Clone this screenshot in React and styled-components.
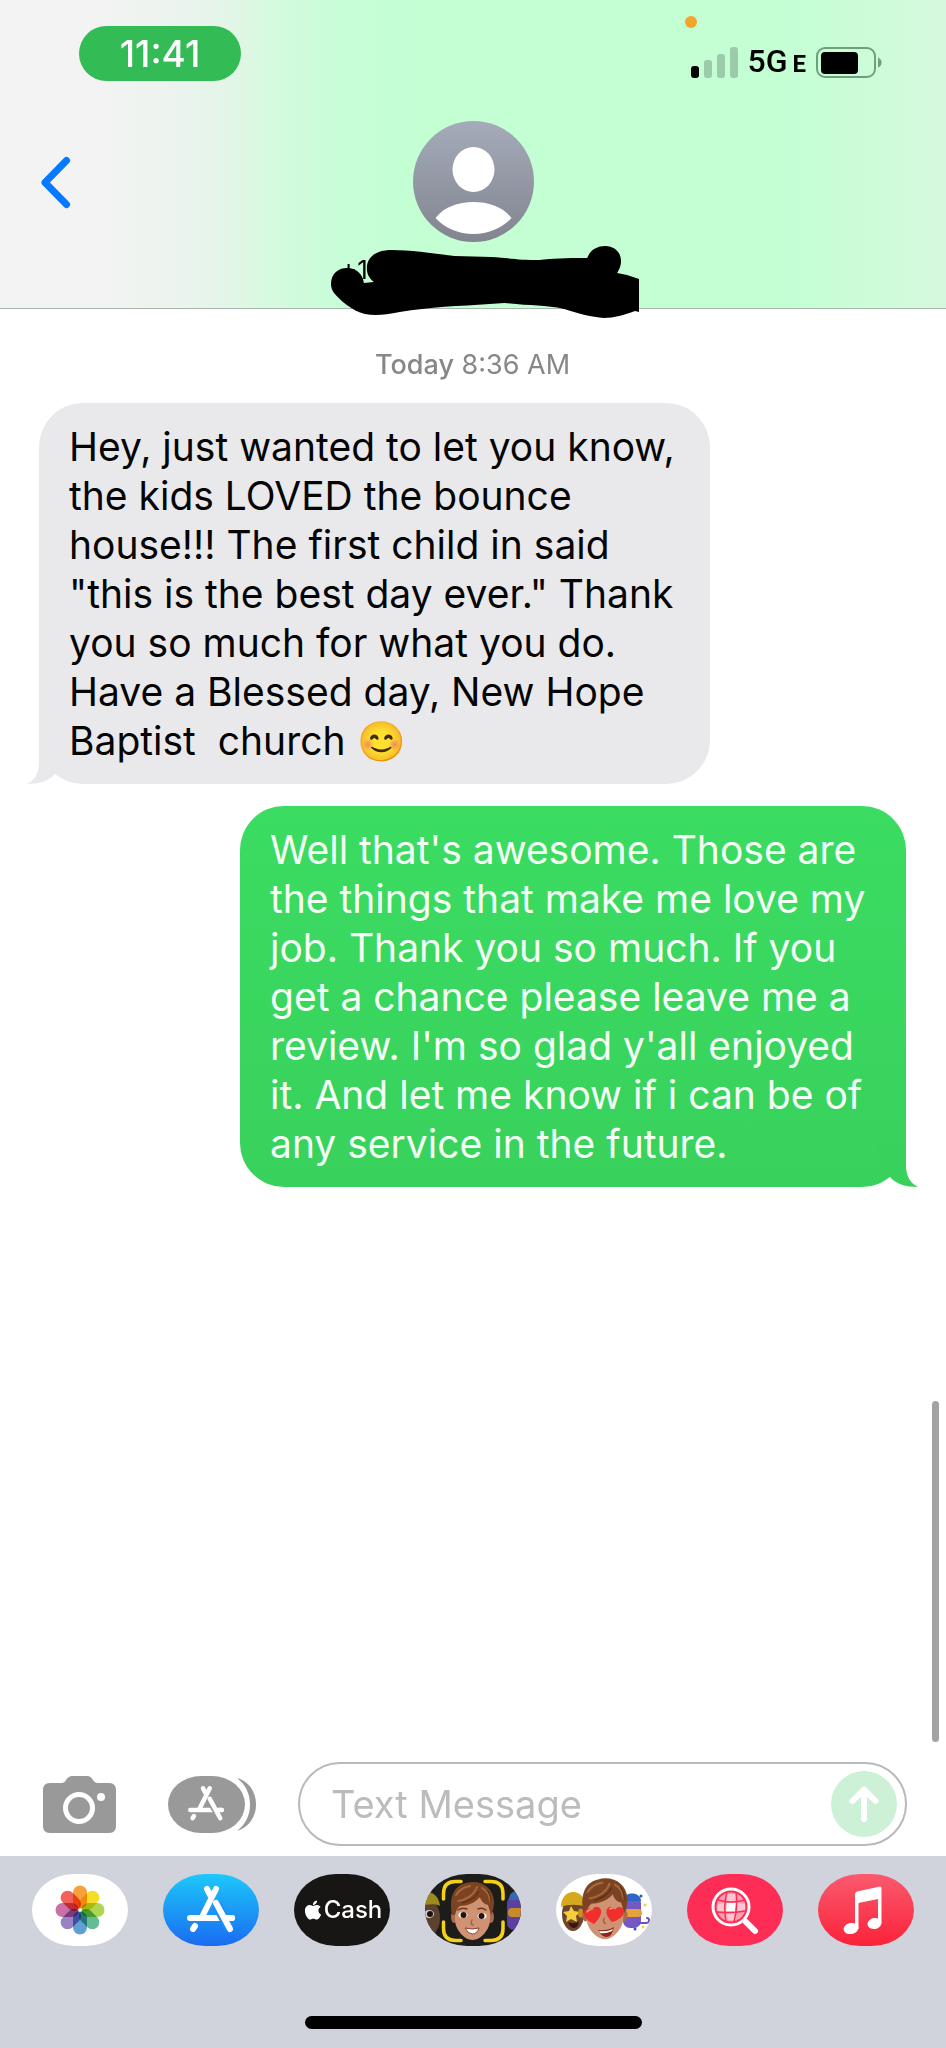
import React from 'react';
import styled, { createGlobalStyle } from 'styled-components';
import { FaApple } from 'react-icons/fa';

const GlobalStyle = createGlobalStyle`
    * {
        box-sizing: border-box;
    }

    body {
        margin: 0;
        background: #ffffff;
        font-family: Inter, "Liberation Sans", sans-serif;
    }

    button {
        padding: 0;
        border: 0;
        background: none;
        cursor: pointer;
        font-family: inherit;
    }
`;

const Page = styled.div`
    display: flex;
    flex-direction: column;
    min-height: 100vh;
    position: relative;
`;

const Header = styled.header`
    border-bottom: 1px solid #a9b8ad;
    background: linear-gradient(
        to right,
        #f3f3f3 0%,
        #f2f3f2 11%,
        #edf3ef 18%,
        #e5f5e9 23%,
        #dbf8e2 27%,
        #d0fbdc 31%,
        #c8fdd8 36%,
        #c3ffd3 44%,
        #c3ffd3 82%,
        #ccfcd8 92%,
        #d7f8de 100%
    );
`;

const StatusBar = styled.div`
    display: flex;
    justify-content: space-between;
    align-items: flex-start;
    padding: 26px 64px 0 79px;
`;

const TimePill = styled.span`
    width: 162px;
    height: 55px;
    border-radius: 28px;
    background: #33bb55;
    color: #ffffff;
    font-size: 37px;
    font-weight: 500;
    line-height: 55px;
    text-align: center;
`;

const StatusIcons = styled.div`
    position: relative;
    display: flex;
    align-items: center;
    gap: 10px;
    height: 31px;
    margin-top: 21px;
`;

const RecordingDot = styled.span`
    position: absolute;
    top: -31px;
    left: -6px;
    width: 12px;
    height: 12px;
    border-radius: 50%;
    background: #f3a52b;
`;

const Network = styled.span`
    font-family: Roboto, sans-serif;
    font-size: 32px;
    font-weight: 500;
    line-height: 32px;

    small {
        margin-left: 5px;
        font-size: 24px;
        font-weight: 700;
    }
`;

const NavBar = styled.div`
    display: grid;
    grid-template-columns: 1fr auto 1fr;
    align-items: start;
    padding: 40px 36px 0;
`;

const BackButton = styled.button`
    justify-self: start;
    margin-top: 31px;
    line-height: 0;
`;

const Contact = styled.div`
    display: flex;
    flex-direction: column;
    align-items: center;
    gap: 4px;
`;

const ContactName = styled.div`
    position: relative;
    width: 310px;
    height: 62px;
    padding: 8px 0 0 22px;
    font-size: 26px;
    line-height: 32px;
`;

const Scribble = styled.svg`
    position: absolute;
    top: 0;
    left: 12px;
`;

const Thread = styled.main`
    flex: 1;
    display: flex;
    flex-direction: column;
    padding: 40px 40px 0 39px;
`;

const Timestamp = styled.p`
    margin: 0 0 22px;
    color: #87878a;
    font-size: 27px;
    line-height: 32px;
    text-align: center;

    b {
        font-weight: 500;
    }
`;

const Bubble = styled.div`
    position: relative;
    align-self: ${({ $sent }) => ($sent ? 'flex-end' : 'flex-start')};
    width: ${({ $sent }) => ($sent ? '666px' : '671px')};
    max-width: 100%;
    margin-bottom: 22px;
    padding: 19px 30px;
    border-radius: 44px;
    background: ${({ $sent }) => ($sent ? 'linear-gradient(#3bdc62, #38d15c)' : '#e9e9eb')};
    color: ${({ $sent }) => ($sent ? '#f4fff6' : '#050505')};
    font-size: 39px;
    line-height: 49px;
    white-space: pre-wrap;
`;

const TailSvg = styled.svg`
    position: absolute;
    bottom: 0;
    fill: ${({ $sent }) => ($sent ? '#38d15c' : '#e9e9eb')};
    ${({ $sent }) => ($sent ? 'right: -12px;' : 'left: -12px; transform: scaleX(-1);')}
`;

const ScrollThumb = styled.div`
    position: absolute;
    right: 7px;
    bottom: 306px;
    width: 7px;
    height: 341px;
    border-radius: 4px;
    background: #a3a3a5;
`;

const Composer = styled.form`
    display: flex;
    align-items: center;
    padding: 0 39px 10px 43px;
`;

const Tools = styled.div`
    display: flex;
    gap: 52px;
    margin-right: 42px;
`;

const ToolButton = styled.button`
    line-height: 0;
`;

const Field = styled.div`
    flex: 1;
    min-width: 0;
    display: flex;
    align-items: center;
    height: 84px;
    padding: 0 8px 0 31px;
    border: 2px solid #b9b9bb;
    border-radius: 42px;
`;

const TextInput = styled.input`
    flex: 1;
    min-width: 0;
    padding: 0;
    border: 0;
    outline: 0;
    background: none;
    font-family: inherit;
    font-size: 38px;

    &::placeholder {
        color: #bcbcbe;
        opacity: 1;
    }
`;

const SendButton = styled.button`
    flex: none;
    width: 66px;
    height: 66px;
    border-radius: 50%;
    background: #cdf1d6;
    line-height: 0;
`;

const Drawer = styled.footer`
    display: flex;
    flex-direction: column;
    align-items: center;
    padding: 18px 32px 19px;
    background: #d0d3db;
`;

const AppRow = styled.nav`
    align-self: stretch;
    display: flex;
    justify-content: space-between;
    margin-bottom: 70px;
`;

const AppButton = styled.button`
    width: 96px;
    height: 72px;
    border-radius: 42px / 36px;
    background: ${({ $bg }) => $bg};
    overflow: hidden;
    line-height: 0;
`;

const CashLabel = styled.span`
    display: flex;
    align-items: center;
    justify-content: center;
    color: #ffffff;
    font-size: 24px;
    font-weight: 500;
    line-height: 72px;
`;

const HomeIndicator = styled.div`
    width: 337px;
    height: 13px;
    border-radius: 7px;
    background: #000000;
`;

const received = `Hey, just wanted to let you know,
the kids LOVED the bounce
house!!! The first child in said
"this is the best day ever." Thank
you so much for what you do.
Have a Blessed day, New Hope
Baptist  church 😊`;

const sent = `Well that's awesome. Those are
the things that make me love my
job. Thank you so much. If you
get a chance please leave me a
review. I'm so glad y'all enjoyed
it. And let me know if i can be of
any service in the future.`;

const SignalIcon = () => (
    <svg width="47" height="31" viewBox="0 0 47 31">
        <rect x="0" y="19" width="8" height="12" rx="3" />
        <g fill="#9bcba9">
            <rect x="13" y="13" width="8" height="18" rx="3" />
            <rect x="26" y="7" width="8" height="24" rx="3" />
            <rect x="39" y="0" width="8" height="31" rx="3" />
        </g>
    </svg>
);

const BatteryIcon = () => (
    <svg width="66" height="31" viewBox="0 0 66 31">
        <rect x="1" y="1" width="58" height="29" rx="8" fill="none" stroke="#6fa07c" strokeWidth="2" />
        <rect x="5" y="5" width="37" height="22" rx="4" />
        <path d="M62 10.5q3.600 1.500 3.600 5t-3.600 5z" fill="#6fa07c" />
    </svg>
);

const BackIcon = () => (
    <svg width="40" height="60" viewBox="0 0 40 60">
        <path
            d="M30.500 8.500 9 30.500l21.500 22"
            fill="none"
            stroke="#057aff"
            strokeWidth="7"
            strokeLinecap="round"
            strokeLinejoin="round"
        />
    </svg>
);

const Avatar = () => (
    <svg width="121" height="121" viewBox="0 0 121 121">
        <defs>
            <linearGradient id="avatar" x1="0" y1="0" x2="0" y2="1">
                <stop offset="0" stopColor="#a5abba" />
                <stop offset="1" stopColor="#82858f" />
            </linearGradient>
        </defs>
        <circle cx="60.5" cy="60.5" r="60.5" fill="url(#avatar)" />
        <ellipse cx="60.5" cy="48.5" rx="21" ry="22.5" fill="#fff" />
        <path d="M22.500 97C31 86 45 81 60.500 81s29.500 5 38 16c-9 10-23 16-38 16s-29-6-38-16z" fill="#fff" />
    </svg>
);

// marker strokes over the phone number
const MarkerScribble = () => (
    <Scribble width="310" height="73" viewBox="0 0 311 73">
        <path d="M1 38C1 28 8 22 17 22s16 6 17 15l10-1c-5-4-7-8-7-14C37 11 46 4 62 4c18 0 38 3 63 6l37 1c16 1 28 3 48 3 20-2 35-2 48-2 3-8 10-12 18-12 10 0 16 7 16 15 0 5-2 9-4 12l10 2 12 4v33l-4-1c-11 4-21 7-31 7-13-1-25-4-40-9-20-4-35-3-60-6l-15 1c-30 2-60 3-90 8-15 3-25 4-35 2C22 65 10 54 4 47c-2-3-3-6-3-9z" />
    </Scribble>
);

const Tail = ({ $sent }) => (
    <TailSvg $sent={$sent} width="50" height="46" viewBox="0 0 50 46">
        <path d="M8 2h30v22c0 11 4 18 12 22-12 0-22-3-28-10z" />
    </TailSvg>
);

const StoreGlyph = ({ width, gap }) => (
    <g fill="none" stroke="#fff" strokeWidth={width} strokeLinecap="round" strokeLinejoin="round">
        <path d="M53 15 39 43M44 15l3 6M27 44h42M30 55l2-3" />
        <path d="m53 30 14 25" stroke={gap} strokeWidth={width + 4} strokeLinecap="butt" />
        <path d="M64 44h5M53 29l14 26" />
    </g>
);

const CameraIcon = () => (
    <svg width="73" height="57" viewBox="0 0 73 57">
        <path d="M7 7h11c3 0 4-1 5-3 2-3 4-4 6-4h15c3 0 4 1 6 4 1 2 3 3 5 3h11c5 0 7 3 7 7v36c0 4-2 7-7 7H7c-5 0-7-3-7-7V14c0-4 2-7 7-7z" fill="#99999a" />
        <circle cx="36" cy="32" r="13.5" fill="none" stroke="#fff" strokeWidth="5" />
        <circle cx="58" cy="21" r="4" fill="#fff" />
    </svg>
);

const AppsIcon = () => (
    <svg width="88" height="57" viewBox="0 0 88 57">
        <rect width="77" height="57" rx="33" ry="28.5" fill="#99999a" />
        <path d="M69 2c12 3 19 14 19 26.500S81 51 69 55c8-6 13-15 13-26.500S77 8 69 2z" fill="#99999a" />
        <g transform="translate(2 1) scale(.75)">
            <StoreGlyph width={6} gap="#99999a" />
        </g>
    </svg>
);

const SendIcon = () => (
    <svg width="66" height="66" viewBox="0 0 66 66">
        <path d="M33 48V19M21.500 30 33 18.500 44.500 30" fill="none" stroke="#fff" strokeWidth="6" strokeLinecap="round" strokeLinejoin="round" />
    </svg>
);

const petals = ['#f7931e', '#f5d90a', '#a4cf3a', '#4fb286', '#4a93d0', '#8c72bd', '#c25d9b', '#ef4b3f'];

const PhotosIcon = () => (
    <svg width="96" height="72" viewBox="0 0 96 72">
        {petals.map((color, i) => (
            <rect
                key={color}
                x="41"
                y="11.5"
                width="14"
                height="23"
                rx="7"
                fill={color}
                opacity="0.88"
                transform={`rotate(${i * 45} 48 36)`}
                style={{ mixBlendMode: 'multiply' }}
            />
        ))}
        <circle cx="48" cy="36" r="1.5" fill="#fff" />
    </svg>
);

const AppStoreIcon = () => (
    <svg width="96" height="72" viewBox="0 0 96 72">
        <StoreGlyph width={6} gap="#1b8ff6" />
    </svg>
);

const Face = () => (
    <g>
        <ellipse cx="29" cy="43" rx="3" ry="6" fill="#a9694a" />
        <ellipse cx="66" cy="43" rx="3" ry="6" fill="#a9694a" />
        <path d="M30 28q17-12 35 0v18c0 9-9 20-17.500 20S30 55 30 46z" fill="#cf9272" />
        <path d="M27 41C24 24 28 12 41 9c14-4 27 4 28 18 0 6-1 10-3 14l-3-10c-4-1-7-4-8-8-5 6-13 9-20 9-3 2-4 5-5 9z" fill="#7b4322" />
        <path d="M33 27c8-1 16-6 19-14M31 21c3-5 8-8 14-9M57 14c5 3 8 7 8 13" fill="none" stroke="#a5683d" strokeWidth="2" strokeLinecap="round" />
        <path d="M37 29c8-2 14-6 17-12M62 16c3 4 4 8 4 12" fill="none" stroke="#54290f" strokeWidth="1" />
        <path d="M47 46q-2 4 1 5" fill="none" stroke="#a56243" strokeWidth="1.5" strokeLinecap="round" />
    </g>
);

const MemojiIcon = () => (
    <svg width="96" height="72" viewBox="0 0 96 72">
        <ellipse cx="3" cy="44" rx="12" ry="18" fill="#5d4131" />
        <path d="M-6 32c0-18 19-18 21 0-5-3-14-2-21 1z" fill="#9c8a1c" />
        <ellipse cx="4" cy="40" rx="5" ry="4" fill="#d8cfc8" />
        <circle cx="5" cy="40" r="3" fill="#1a1110" />
        <rect x="82" y="22" width="18" height="34" rx="7" fill="#5a419e" />
        <path d="M84 26c0-8 6-10 12-9v9z" fill="#3767b0" />
        <rect x="83" y="34" width="18" height="9" rx="4" fill="#c88b2c" />
        <Face />
        <path d="M33 36q4-3 9-1M53 35q4-2 8 1" fill="none" stroke="#6e391f" strokeWidth="1.5" strokeLinecap="round" />
        <ellipse cx="38" cy="41" rx="4.5" ry="3" fill="#fff" />
        <ellipse cx="57" cy="42" rx="4.5" ry="3" fill="#fff" />
        <circle cx="38.5" cy="41" r="3" fill="#251511" />
        <circle cx="56.5" cy="42" r="3" fill="#251511" />
        <path d="M40 54q7 2 14 0-2 6-6.500 6T40 54z" fill="#fff" stroke="#8c3e30" strokeWidth="1" />
        <path
            d="M18.500 25v-5.500q0-12 12-12H36M60 7.500h6q12 0 12 12V25M18.500 48v6.500q0 12 12 12H36M60 66.500h6q12 0 12-12V48"
            fill="none"
            stroke="#f6cf17"
            strokeWidth="3.500"
            strokeLinecap="round"
        />
    </svg>
);

const StickerIcon = () => (
    <svg width="96" height="72" viewBox="0 0 96 72">
        <ellipse cx="17" cy="40" rx="11" ry="17" fill="#70452c" />
        <path d="M5 33c0-20 24-20 25 0-7-3-18-3-25 0z" fill="#d5a81d" />
        <path d="m15 32 3 5 6 1-4 4 1 6-6-3-5 3 1-6-4-4 6-1z" fill="#f5ce3e" />
        <ellipse cx="25" cy="39" rx="3" ry="4.500" fill="#c79322" />
        <path d="M12 48q6 3 11-1-1 7-5 7t-6-6z" fill="#3a1612" />
        <rect x="67" y="22" width="18" height="32" rx="7" fill="#7458c4" />
        <path d="M67 27c0-10 18-10 18 0z" fill="#2b67c6" />
        <rect x="68" y="35" width="18" height="8" rx="4" fill="#e9a23a" />
        <path d="M82 49h8c4 0 4-5 1-5" fill="none" stroke="#6b50c0" strokeWidth="2" strokeLinecap="round" />
        <circle cx="85" cy="22" r="1.500" fill="#2958b8" />
        <circle cx="89" cy="31" r="1.500" fill="#efd34a" />
        <circle cx="87" cy="53" r="1.500" fill="#efd34a" />
        <circle cx="79" cy="55" r="1.500" fill="#2958b8" />
        <g transform="translate(-1 -4) scale(1.050)">
            <Face />
        </g>
        <path d="M42 56q9 1 16-3-2 10-8 10-5-1-8-7z" fill="#8e2318" />
        <path d="M43 57q8 1 14-2l-1 2q-6 3-12 2z" fill="#fff" />
        <g fill="#ee2f2b">
            <path d="M38 50c-6-3-11-7-10-12 2-5 7-4 8-1 1-5 7-6 9-1 1 5-3 10-7 14z" />
            <path d="M56 48c-4-4-7-9-5-13 3-4 7-2 8 1 2-4 8-4 9 1 0 5-5 9-12 11z" />
        </g>
        <path d="M31 38q1-2 3-2M54 35q1-1 3-1" fill="none" stroke="#ff9b8f" strokeWidth="1.500" strokeLinecap="round" />
    </svg>
);

const ImagesIcon = () => (
    <svg width="96" height="72" viewBox="0 0 96 72">
        <circle cx="44" cy="33" r="14.5" fill="#fd9fb1" />
        <path d="M39 20h11l-1 8h-9zM31 30l8-1-1 8h-8zM50 29l8 1v6l-8 1zM39 38l10-1v9h-8z" fill="#fec6d0" />
        <path d="M40 29h9l-1 8h-9z" fill="#fff" />
        <path d="M40 18q-4 14-1 30M49 18q2 14-2 30M31 26q13 4 27 0M30 38q14 2 28-1" fill="none" stroke="#fd2d55" strokeWidth="1.500" />
        <g fill="none" stroke="#fff">
            <circle cx="44" cy="33" r="18" strokeWidth="3" />
            <path d="m59 48 9 9" strokeWidth="6" strokeLinecap="round" />
        </g>
    </svg>
);

const MusicIcon = () => (
    <svg width="96" height="72" viewBox="0 0 96 72">
        <g fill="#fff">
            <path d="M37 20q0-2 2-2.500l23-5q1.500 0 1.500 1.500V49H60V25L40.500 29v26H37z" />
            <ellipse cx="33" cy="54.500" rx="7.500" ry="5.500" transform="rotate(-12 33 54.500)" />
            <ellipse cx="56.500" cy="49.500" rx="7" ry="5.500" transform="rotate(-12 56.500 49.500)" />
        </g>
    </svg>
);

const apps = [
    { name: 'Photos', bg: '#ffffff', icon: <PhotosIcon /> },
    { name: 'App Store', bg: 'linear-gradient(#1dc8fb, #1a6bf0)', icon: <AppStoreIcon /> },
    { name: 'Apple Cash', bg: '#171615', icon: <CashLabel><FaApple size={22} />Cash</CashLabel> },
    { name: 'Memoji', bg: '#1c1c1b', icon: <MemojiIcon /> },
    { name: 'Stickers', bg: '#ffffff', icon: <StickerIcon /> },
    { name: 'Images', bg: '#fd2d55', icon: <ImagesIcon /> },
    { name: 'Music', bg: 'linear-gradient(#fb5a6e, #fa2239)', icon: <MusicIcon /> },
];

export function App() {
    return (
        <Page>
            <GlobalStyle />
            <Header>
                <StatusBar>
                    <TimePill>11:41</TimePill>
                    <StatusIcons>
                        <RecordingDot />
                        <SignalIcon />
                        <Network>5G<small>E</small></Network>
                        <BatteryIcon />
                    </StatusIcons>
                </StatusBar>
                <NavBar>
                    <BackButton aria-label="Back"><BackIcon /></BackButton>
                    <Contact>
                        <Avatar />
                        <ContactName>
                            +1
                            <MarkerScribble />
                        </ContactName>
                    </Contact>
                </NavBar>
            </Header>

            <Thread>
                <Timestamp><b>Today</b> 8:36 AM</Timestamp>
                <Bubble>
                    {received}
                    <Tail />
                </Bubble>
                <Bubble $sent>
                    {sent}
                    <Tail $sent />
                </Bubble>
            </Thread>
            <ScrollThumb />

            <Composer onSubmit={(e) => e.preventDefault()}>
                <Tools>
                    <ToolButton type="button" aria-label="Camera"><CameraIcon /></ToolButton>
                    <ToolButton type="button" aria-label="Apps"><AppsIcon /></ToolButton>
                </Tools>
                <Field>
                    <TextInput aria-label="Text Message" placeholder="Text Message" />
                    <SendButton aria-label="Send"><SendIcon /></SendButton>
                </Field>
            </Composer>

            <Drawer>
                <AppRow>
                    {apps.map(({ name, bg, icon }) => (
                        <AppButton key={name} $bg={bg} aria-label={name}>{icon}</AppButton>
                    ))}
                </AppRow>
                <HomeIndicator />
            </Drawer>
        </Page>
    );
}

export default App;
